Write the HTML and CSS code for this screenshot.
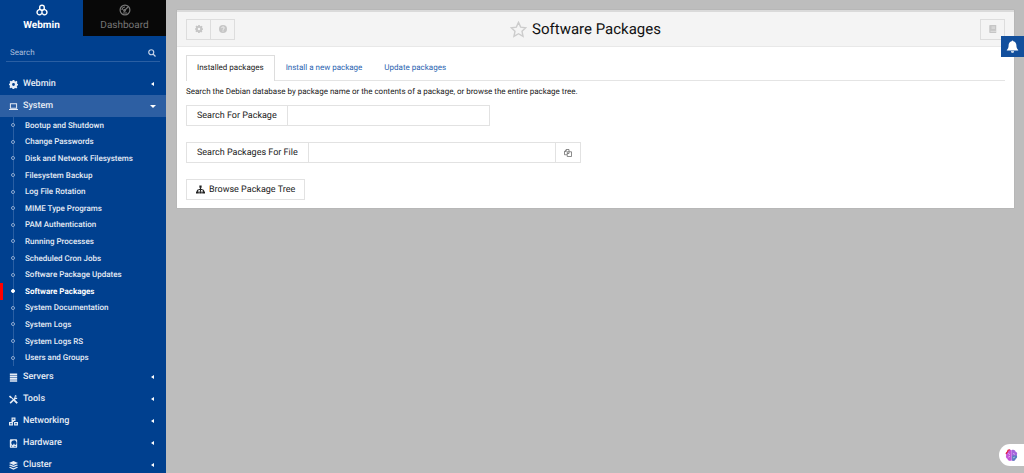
FILE: index.html
```html
<!DOCTYPE html>
<html lang="en">
<head>
<meta charset="utf-8">
<title>Software Packages</title>
<link rel="stylesheet" href="styles.css">
</head>
<body>
<div class="app">
  <aside class="sidebar">
    <nav class="switch" aria-label="Views">
      <a class="switch-tab active" href="#webmin">
        <svg class="icon-switch" viewBox="0 0 24 24" fill="none" stroke="currentColor" stroke-width="2.8" stroke-linejoin="round"><path d="M7.500 10V6.500Q7.500 2.500 12 2.500T16.500 6.500V10L12 12.500zM7 10.500L3.500 13Q1 16 3 19.500T9 21L12 19V13zM17 10.500L20.500 13Q23 16 21 19.500T15 21L12 19V13z"/></svg>
        Webmin
      </a>
      <a class="switch-tab" href="#dashboard">
        <svg class="icon-switch" viewBox="0 0 24 24" fill="none" stroke="currentColor" stroke-width="2.4"><circle cx="12" cy="12" r="9.8"/><path d="M11 13l7-7M6 12a6 6 0 0 1 6-6M8 18h8"/><circle cx="11" cy="13" r="1.6"/></svg>
        Dashboard
      </a>
    </nav>
    <form class="search">
      <input class="search-input" type="search" placeholder="Search" aria-label="Search">
      <button class="search-button" type="button" aria-label="Search"><svg class="icon-s" viewBox="0 0 16 16" fill="none" stroke="currentColor" stroke-width="2.4"><circle cx="6.500" cy="6.500" r="5"/><path d="M10 10l5 5"/></svg></button>
    </form>
    <nav class="menu" aria-label="Modules">
      <a class="row" href="#m-webmin"><svg class="icon-m" viewBox="0 0 16 16" fill="currentColor"><path fill-rule="evenodd" d="M6.500 0h3l.5 2 1.400.6 1.900-1.100 1.700 2-1 1.800.5 1.400 1.500.3v2.500l-1.600.5-.6 1.500 1 1.700-2 2-1.800-1-1.400.6-.6 1.700h-3L6 14.300l-1.400-.6-1.800 1-2-2 1-1.800-.6-1.400L0 9V6.800l1.500-.5.6-1.400-1-1.800 2-1.900 1.700 1L6 1.800zM8 5.500a2.500 2.500 0 1 0 0 5 2.500 2.500 0 0 0 0-5z"/></svg><span class="name">Webmin</span><span class="caret"></span></a>
      <a class="row open" href="#m-system"><svg class="icon-m" viewBox="0 0 16 16" fill="none" stroke="currentColor" stroke-width="1.800"><path d="M2.500 3h11v8h-11zM0 13.200h16"/></svg><span class="name">System</span><span class="caret down"></span></a>
      <ul class="sub">
        <li class="item"><a class="sublink" href="#s1">Bootup and Shutdown</a></li>
        <li class="item"><a class="sublink" href="#s2">Change Passwords</a></li>
        <li class="item"><a class="sublink" href="#s3">Disk and Network Filesystems</a></li>
        <li class="item"><a class="sublink" href="#s4">Filesystem Backup</a></li>
        <li class="item"><a class="sublink" href="#s5">Log File Rotation</a></li>
        <li class="item"><a class="sublink" href="#s6">MIME Type Programs</a></li>
        <li class="item"><a class="sublink" href="#s7">PAM Authentication</a></li>
        <li class="item"><a class="sublink" href="#s8">Running Processes</a></li>
        <li class="item"><a class="sublink" href="#s9">Scheduled Cron Jobs</a></li>
        <li class="item"><a class="sublink" href="#s10">Software Package Updates</a></li>
        <li class="item current"><a class="sublink" href="#s11" aria-current="page">Software Packages</a></li>
        <li class="item"><a class="sublink" href="#s12">System Documentation</a></li>
        <li class="item"><a class="sublink" href="#s13">System Logs</a></li>
        <li class="item"><a class="sublink" href="#s14">System Logs RS</a></li>
        <li class="item"><a class="sublink" href="#s15">Users and Groups</a></li>
      </ul>
      <a class="row" href="#m-servers"><svg class="icon-m" viewBox="0 0 16 16" fill="currentColor"><path d="M1.500 1h13v3h-13zM1.500 5h13v3h-13zM1.500 9h13v3h-13zM1.500 13h13v2.500h-13z"/></svg><span class="name">Servers</span><span class="caret"></span></a>
      <a class="row" href="#m-tools"><svg class="icon-m" viewBox="0 0 16 16" fill="none" stroke="currentColor"><path stroke-width="2.800" d="M2 14.500L11 6"/><path stroke-width="2" d="M10.500 2.500v3.500h4M1 2l4 3 9.500 9.500"/><path stroke-width="2.800" d="M1 2l3 3M10 10l4.500 4.500M11 2.500l2-1.500"/></svg><span class="name">Tools</span><span class="caret"></span></a>
      <a class="row" href="#m-networking"><svg class="icon-m" viewBox="0 0 16 16" fill="currentColor"><path fill-rule="evenodd" d="M4.500 1h7v6h-3v2H16v6H9V9H7v6H0V9h4.500zM6.500 3v2h3V3zM2 11v2h3v-2zm9 0v2h3v-2z"/></svg><span class="name">Networking</span><span class="caret"></span></a>
      <a class="row" href="#m-hardware"><svg class="icon-m" viewBox="0 0 16 16" fill="currentColor"><path fill-rule="evenodd" d="M3 .5h10a1.500 1.500 0 0 1 1.500 1.500v12a1.500 1.500 0 0 1-1.500 1.500H3A1.500 1.500 0 0 1 1.500 14V2A1.500 1.500 0 0 1 3 .5zM8 2.500a4.300 4.300 0 0 0-1 8.400l1.500-3 1.500 1v2a4.300 4.300 0 0 0-2-8.400zM3.500 12v1.500h2V12zm5 .3v1.200h4v-1.200z"/></svg><span class="name">Hardware</span><span class="caret"></span></a>
      <a class="row" href="#m-cluster"><svg class="icon-m" viewBox="0 0 16 16" fill="currentColor"><path d="M8 0l8 3.500L8 7 0 3.500zM1.800 6L8 8.600 14.200 6 16 7.500 8 11 0 7.500zM1.800 10L8 12.700l6.200-2.700 1.800 1.600L8 15.500l-8-3.900z"/></svg><span class="name">Cluster</span><span class="caret"></span></a>
    </nav>
  </aside>

  <main class="content">
    <section class="panel">
      <header class="head">
        <div class="group">
          <button class="tool" type="button" aria-label="Module configuration"><svg class="icon-s" viewBox="0 0 16 16" fill="currentColor"><path fill-rule="evenodd" d="M6.500 0h3l.5 2 1.400.6 1.900-1.100 1.700 2-1 1.800.5 1.400 1.500.3v2.500l-1.600.5-.6 1.500 1 1.700-2 2-1.800-1-1.400.6-.6 1.700h-3L6 14.300l-1.400-.6-1.800 1-2-2 1-1.800-.6-1.400L0 9V6.800l1.500-.5.6-1.400-1-1.800 2-1.900 1.700 1L6 1.800zM8 5.500a2.500 2.500 0 1 0 0 5 2.500 2.500 0 0 0 0-5z"/></svg></button>
          <button class="tool" type="button" aria-label="Help"><svg class="icon-s" viewBox="0 0 16 16"><circle cx="8" cy="8" r="8" fill="currentColor"/><path d="M5.500 6.200C5.500 3 10.500 3 10.500 6c0 1.800-2.500 1.600-2.500 3.600M8 11v2" fill="none" stroke="#f4f4f4" stroke-width="2"/></svg></button>
        </div>
        <h1 class="title"><svg class="star" viewBox="0 0 18 18" fill="none" stroke="currentColor" stroke-width="1.500"><path d="M9 1.500l2.300 5 5.400.6-4 3.700 1.100 5.400L9 13.500l-4.800 2.700 1.100-5.400-4-3.700 5.400-.6z"/></svg>Software Packages</h1>
        <div class="group end">
          <button class="tool" type="button" aria-label="Search documentation"><svg class="icon-s" viewBox="0 0 16 16"><path d="M2 0h12.500v16H2a1.500 1.500 0 0 1-1.500-1.500v-13A1.500 1.500 0 0 1 2 0z" fill="currentColor"/><path d="M5 4h7M5 6.500h7M3 12.700h11" stroke="#f4f4f4" stroke-width="1"/></svg></button>
        </div>
      </header>
      <div class="body">
        <nav class="tabs" aria-label="Package actions">
          <a class="tab selected" href="#installed">Installed packages</a>
          <a class="tab" href="#install">Install a new package</a>
          <a class="tab" href="#update">Update packages</a>
        </nav>
        <p class="intro">Search the Debian database by package name or the contents of a package, or browse the entire package tree.</p>
        <form class="forms">
          <div class="field">
            <button class="btn" type="button">Search For Package</button>
            <input class="text" type="text" aria-label="Package name">
          </div>
          <div class="field wide">
            <button class="btn" type="button">Search Packages For File</button>
            <input class="text" type="text" aria-label="File path">
            <button class="btn pick" type="button" aria-label="Choose file"><svg class="icon-s" viewBox="0 0 16 16" fill="none" stroke="currentColor" stroke-width="1.500"><path d="M6.500 5.500h8.500V15H6.500zM6 11.500H1V5l3.500-4H10v4M1 5h3.500V1M6.500 9H10V5.500"/></svg></button>
          </div>
          <button class="btn browse" type="button"><svg class="icon-m" viewBox="0 0 16 16"><path d="M8 4v8M2.500 13V9.500L8 7l5.500 2.500V13" fill="none" stroke="currentColor" stroke-width="1.800"/><path d="M6 1h4v4H6zM0 11.500h5V15H0zM5.800 11.500h4.400V15H5.800zM11 11.500h5V15h-5z" fill="currentColor"/></svg>Browse Package Tree</button>
        </form>
      </div>
    </section>
  </main>
  <button class="bell" type="button" aria-label="Notifications"><svg class="icon-bell" viewBox="0 0 16 16" fill="currentColor"><path d="M7 1.500a1 1 0 0 1 2 0c2.500.5 3.800 2.500 3.800 5 0 3 .7 4.300 2.200 5.700v.8H1v-.8c1.500-1.400 2.200-2.700 2.200-5.700 0-2.500 1.300-4.500 3.800-5zM6 13.700h4a2 2 0 0 1-4 0z"/></svg></button>
  <button class="assist" type="button" aria-label="Assistant"><svg class="icon-brain" viewBox="0 0 16 16"><path d="M8 1.500C5 0 3 2 3 3.500 1 4 .5 6 1.500 7.500.5 9.500 1.500 11.500 3 12c.5 2.500 3 3 5 2z" fill="#c455d8"/><path d="M8 1.500C11 0 13 2 13 3.500c2 .5 2.500 2.500 1.500 4 1 2 0 4-1.500 4.500-.5 2.500-3 3-5 2z" fill="#a565dc"/><path d="M9 8h5.500c1 2 0 3.500-1.500 4-.5 2.500-2.500 3-4 2z" fill="#5684bd"/><path d="M1.500 6C1.500 4 3 4 3 3.500 3.200 2 4.500 1 6 1.200" fill="none" stroke="#e3263f" stroke-width="1.500"/><path d="M4 5.500l2 1.500M4 10l2-1M10 5.500l2 1M10 11l2-1" stroke="#fff" stroke-width=".7"/></svg></button>
</div>
</body>
</html>
```
FILE: styles.css
```css
*, *::before { box-sizing: border-box; }
body {
  margin: 0;
  background: #bdbdbd;
  color: #222;
  font-family: Roboto, "Liberation Sans", sans-serif;
  font-size: 8px;
  text-rendering: geometricPrecision;
}
a { color: inherit; text-decoration: none; }
button, input { margin: 0; font: inherit; color: inherit; border-radius: 0; text-rendering: inherit; }
svg { display: block; flex: none; }
.app { display: flex; min-height: 100vh; }

.sidebar {
  flex: none;
  width: 166px;
  height: 100vh;
  overflow: hidden;
  background: #00408f;
  color: #e6ecf5;
  font-weight: 500;
}
.switch { display: grid; grid-template-columns: 1fr 1fr; }
.switch-tab {
  display: flex;
  flex-direction: column;
  align-items: center;
  gap: 4px;
  height: 36px;
  padding-top: 4px;
  background: #080808;
  color: #777;
  font-size: 10px;
  font-weight: 400;
  line-height: 12px;
}
.switch-tab.active { background: none; color: #fff; font-weight: 700; }
.icon-switch { width: 12px; height: 12px; }
.search {
  display: flex;
  align-items: center;
  height: 18px;
  margin: 8px 6px 11px;
  border-bottom: 1px solid #2a5fa3;
}
.search-input {
  flex: 1;
  min-width: 0;
  padding: 0 4px;
  border: 0;
  background: none;
  outline: 0;
  font-weight: 400;
}
.search-input::placeholder { color: #a9bddb; opacity: 1; }
.search-button { padding: 0 4px; border: 0; background: none; color: #c5d3e8; }
.icon-s { width: 8px; height: 8px; }
.icon-m { width: 9px; height: 9px; }
.row {
  display: flex;
  align-items: center;
  gap: 5px;
  height: 22px;
  padding: 0 12px 0 9px;
  font-size: 9px;
}
.row.open { padding-right: 10px; background: #2d5fa3; }
.name { flex: 1; }
.caret {
  border: solid transparent;
  border-width: 2px 3px 2px 0;
  border-right-color: #fff;
}
.caret.down { border-width: 3px 3px 0; border-color: #fff transparent transparent; }
.sub {
  display: grid;
  grid-auto-rows: 1fr;
  height: 249px;
  margin: 0;
  padding: 0;
  list-style: none;
  background: linear-gradient(#2a5fa3, #2a5fa3) 13px 0 / 1px 100% no-repeat;
}
.item { display: flex; align-items: center; padding-left: 11px; }
.item::before {
  content: "";
  width: 4px;
  height: 4px;
  margin-right: 10px;
  border: 1px solid #8faad0;
  border-radius: 50%;
  background: #00408f;
}
.item.current { padding-left: 8px; border-left: 3px solid #f00; color: #fff; font-weight: 700; }
.item.current::before { border-color: #fff; background: #fff; }

.content { flex: 1; min-width: 0; padding: 10px 10px 10px 11px; }
.panel { border-top: 2px solid #dadada; background: #fff; box-shadow: 0 0 1px #999; }
.head {
  display: grid;
  grid-template-columns: 1fr auto 1fr;
  align-items: center;
  height: 35px;
  padding: 0 9px;
  border-bottom: 1px solid #e8e8e8;
  background: #f4f4f4;
}
.group { display: flex; }
.group.end { justify-content: flex-end; }
.tool {
  display: grid;
  place-items: center;
  width: 25px;
  height: 21px;
  padding: 0;
  border: 1px solid #ddd;
  background: none;
  color: #c6c6c6;
}
.tool + .tool { margin-left: -1px; }
.title {
  display: flex;
  align-items: center;
  gap: 5px;
  margin: 0;
  padding-right: 20px;
  color: #111;
  font-size: 15px;
  font-weight: 400;
  line-height: 18px;
}
.star { width: 17px; height: 17px; color: #ccc; }
.body { padding: 8px 9px; }
.tabs { display: flex; border-bottom: 1px solid #e4e4e4; }
.tab { padding: 7px 10px; border: 1px solid transparent; border-bottom: 0; color: #2a64b0; line-height: 10px; }
.tab.selected { margin-bottom: -1px; padding-bottom: 8px; border-color: #ddd; background: #fff; color: #222; }
.intro { margin: 5px 0 7px; line-height: 12px; }
.forms { display: flex; flex-direction: column; align-items: flex-start; gap: 16px; }
.field { display: flex; width: 304px; max-width: 100%; }
.field.wide { width: 395px; }
.btn {
  flex: none;
  height: 21px;
  padding: 0 10px;
  border: 1px solid #e2e2e2;
  background: #fff;
  font-size: 9px;
  line-height: 12px;
}
.text {
  flex: 1;
  min-width: 0;
  height: 21px;
  margin-left: -1px;
  padding: 0 6px;
  border: 1px solid #e2e2e2;
  background: #fff;
}
.pick { width: 26px; margin-left: -1px; padding: 0 8px; color: #666; }
.browse { display: flex; align-items: center; gap: 4px; padding: 0 9px; }

.bell {
  position: fixed;
  top: 36px;
  right: 0;
  display: grid;
  place-items: center;
  width: 23px;
  height: 21px;
  padding: 0;
  border: 0;
  background: #124f9c;
  color: #fff;
}
.icon-bell { width: 13px; height: 13px; }
.assist {
  position: fixed;
  right: 0;
  bottom: 7px;
  width: 25px;
  height: 22px;
  padding: 0 6px;
  border: 0;
  border-radius: 11px 0 0 11px;
  background: #fff;
}
.icon-brain { width: 13px; height: 13px; }
```
